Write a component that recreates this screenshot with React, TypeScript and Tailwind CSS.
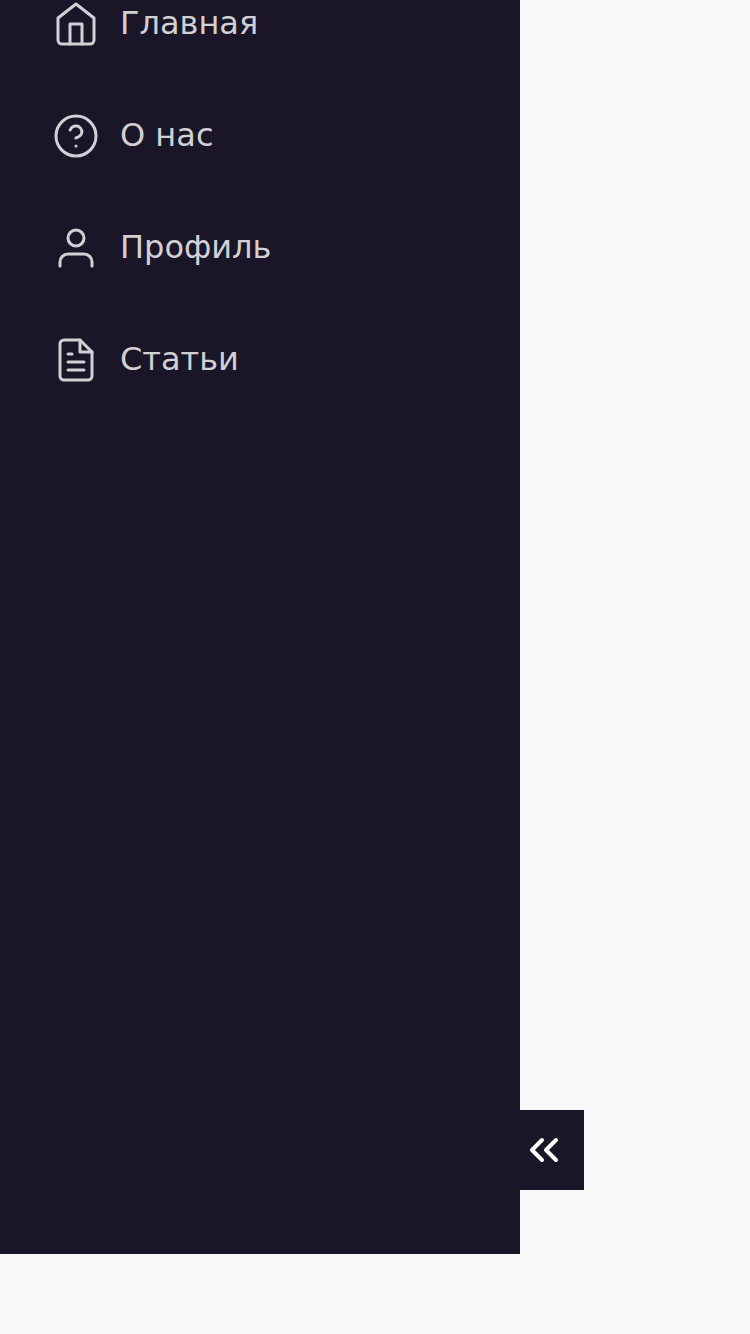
import type { ReactNode } from 'react';

interface NavItem {
  label: string;
  icon: ReactNode;
}

const items: NavItem[] = [
  {
    label: 'Главная',
    icon: (
      <>
        <path d="M3 9l9-7 9 7v11a2 2 0 0 1-2 2H5a2 2 0 0 1-2-2z" />
        <polyline points="9 22 9 12 15 12 15 22" />
      </>
    ),
  },
  {
    label: 'О нас',
    icon: (
      <>
        <circle cx="12" cy="12" r="10" />
        <path d="M9.09 9a3 3 0 0 1 5.83 1c0 2-3 3-3 3" />
        <line x1="12" y1="17" x2="12.01" y2="17" />
      </>
    ),
  },
  {
    label: 'Профиль',
    icon: (
      <>
        <path d="M20 21v-2a4 4 0 0 0-4-4H8a4 4 0 0 0-4 4v2" />
        <circle cx="12" cy="7" r="4" />
      </>
    ),
  },
  {
    label: 'Статьи',
    icon: (
      <>
        <path d="M14 2H6a2 2 0 0 0-2 2v16a2 2 0 0 0 2 2h12a2 2 0 0 0 2-2V8z" />
        <polyline points="14 2 14 8 20 8" />
        <line x1="16" y1="13" x2="8" y2="13" />
        <line x1="16" y1="17" x2="8" y2="17" />
        <polyline points="10 9 9 9 8 9" />
      </>
    ),
  },
];

export default function App() {
  return (
    <div className="flex h-[1334px] w-full items-start overflow-hidden bg-[#f8f8f8] font-['DejaVu_Sans',sans-serif]">
      <aside className="h-[1254px] w-[520px] shrink-0 bg-[#1a1628]">
        <nav className="flex flex-col gap-16 pl-[52px] text-[#d1d0d4]">
          {items.map((item) => (
            <a key={item.label} href="#" className="flex h-12 items-center gap-5">
              <svg
                viewBox="0 0 24 24"
                className="size-12 shrink-0"
                fill="none"
                stroke="currentColor"
                strokeWidth="1.5"
                strokeLinecap="round"
                strokeLinejoin="round"
              >
                {item.icon}
              </svg>
              <span className="pb-[3px] text-[32px] leading-[38px]">{item.label}</span>
            </a>
          ))}
        </nav>
      </aside>
      <button
        aria-label="Свернуть меню"
        className="mt-[1110px] flex h-20 w-16 shrink-0 items-center bg-[#1a1628] text-white"
      >
        <svg
          viewBox="0 0 24 24"
          className="size-12"
          fill="none"
          stroke="currentColor"
          strokeWidth="2"
          strokeLinecap="round"
          strokeLinejoin="round"
        >
          <polyline points="11 17 6 12 11 7" />
          <polyline points="18 17 13 12 18 7" />
        </svg>
      </button>
    </div>
  );
}
